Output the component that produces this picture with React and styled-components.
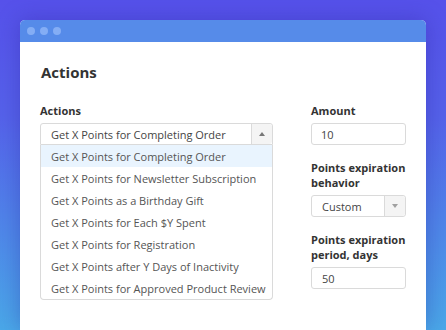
import React from "react";
import styled, { createGlobalStyle } from "styled-components";

const actions = [
  "Get X Points for Completing Order",
  "Get X Points for Newsletter Subscription",
  "Get X Points as a Birthday Gift",
  "Get X Points for Each $Y Spent",
  "Get X Points for Registration",
  "Get X Points after Y Days of Inactivity",
  "Get X Points for Approved Product Review",
];

const GlobalStyle = createGlobalStyle`
  html, body {
    margin: 0;
    height: 330px;
    overflow: hidden;
  }
  body {
    font-family: "Open Sans", "Liberation Sans", sans-serif;
    background: linear-gradient(to bottom, #5651ea 0%, #5562ea 35%, #4aa8e8 100%);
  }
`;

const Page = styled.div`
  padding: 20px 20px 0;
`;

const Window = styled.div`
  width: 406px;
  height: 310px;
  background: #fff;
  border-radius: 5px 5px 0 0;
  box-shadow: 0 0 22px rgba(40, 30, 150, 0.35);
  overflow: hidden;
`;

const TitleBar = styled.div`
  height: 22px;
  background: #568be9;
  display: flex;
  align-items: center;
  gap: 5px;
  padding-left: 7px;
`;

const Dot = styled.span`
  width: 8px;
  height: 8px;
  border-radius: 50%;
  background: #84adf5;
`;

const Body = styled.div`
  padding: 20px 20px 0;
`;

const Heading = styled.h1`
  margin: 0 0 21px 1px;
  font-size: 15px;
  line-height: 20px;
  font-weight: 700;
  color: #333;
`;

const Columns = styled.div`
  display: grid;
  grid-template-columns: 233px 95px;
  column-gap: 38px;
  align-items: start;
`;

const Group = styled.div`
  display: flex;
  flex-direction: column;
  margin-bottom: 15px;
`;

const Label = styled.label`
  font-size: 11px;
  line-height: 15px;
  font-weight: 700;
  color: #333;
  margin-bottom: 5px;
`;

const Control = styled.div`
  box-sizing: border-box;
  height: 22px;
  display: flex;
  align-items: stretch;
  border: 1px solid #dadada;
  border-radius: ${p => (p.open ? "3px 3px 0 0" : "3px")};
  background: #fff;
  font-size: 11px;
  color: #444;
`;

const Value = styled.span`
  flex: 1;
  display: flex;
  align-items: center;
  padding-left: ${p => p.pad || 10}px;
`;

const Toggle = styled.span`
  width: 20px;
  display: flex;
  align-items: center;
  justify-content: center;
  background: #f4f4f4;
  border-left: 1px solid #dadada;
  border-radius: 0 3px 3px 0;
`;

const Arrow = styled.span`
  width: 0;
  height: 0;
  border-left: 3.5px solid transparent;
  border-right: 3.5px solid transparent;
  ${p =>
    p.up
      ? "border-bottom: 4px solid #777;"
      : "border-top: 4px solid #a0a0a0;"}
`;

const Menu = styled.ul`
  list-style: none;
  margin: 0;
  padding: 0;
  border: 1px solid #dadada;
  border-top: none;
  border-radius: 0 0 4px 4px;
  background: #fff;
`;

const Item = styled.li`
  height: 22px;
  display: flex;
  align-items: center;
  padding-left: 10px;
  font-size: 11px;
  color: #555;
  background: ${p => (p.active ? "#e9f4fe" : "transparent")};
`;

const Select = ({ value, open, up }) => (
  <Control open={open}>
    <Value>{value}</Value>
    <Toggle>
      <Arrow up={up} />
    </Toggle>
  </Control>
);

export default function App() {
  return (
    <>
      <GlobalStyle />
      <Page>
        <Window>
          <TitleBar>
            <Dot />
            <Dot />
            <Dot />
          </TitleBar>
          <Body>
            <Heading>Actions</Heading>
            <Columns>
              <div>
                <Group>
                  <Label>Actions</Label>
                  <Select value={actions[0]} open up />
                  <Menu>
                    {actions.map((a, i) => (
                      <Item key={a} active={i === 0}>
                        {a}
                      </Item>
                    ))}
                  </Menu>
                </Group>
              </div>
              <div>
                <Group>
                  <Label>Amount</Label>
                  <Control>
                    <Value pad={9}>10</Value>
                  </Control>
                </Group>
                <Group>
                  <Label>
                    Points expiration
                    <br />
                    behavior
                  </Label>
                  <Select value="Custom" />
                </Group>
                <Group>
                  <Label>
                    Points expiration
                    <br />
                    period, days
                  </Label>
                  <Control>
                    <Value>50</Value>
                  </Control>
                </Group>
              </div>
            </Columns>
          </Body>
        </Window>
      </Page>
    </>
  );
}
